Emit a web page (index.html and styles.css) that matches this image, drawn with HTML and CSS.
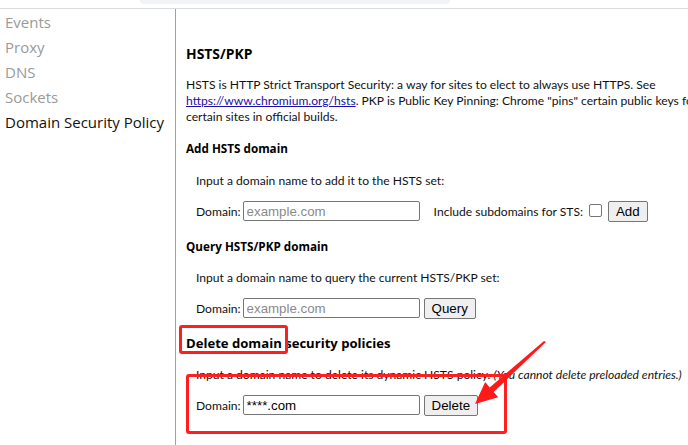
FILE: index.html
```html
<!DOCTYPE html>
<html>
<head>
<meta charset="utf-8">
<link rel="stylesheet" href="styles.css">
</head>
<body>
<div class="topbar"><div class="tab"></div></div>
<div class="main">
  <nav class="sidebar">
    <div class="nav-item">Events</div>
    <div class="nav-item">Proxy</div>
    <div class="nav-item">DNS</div>
    <div class="nav-item">Sockets</div>
    <div class="nav-item active">Domain Security Policy</div>
  </nav>
  <div class="content">
    <h2 class="h2 first">HSTS/PKP</h2>
    <p class="intro">HSTS is HTTP Strict Transport Security: a way for sites to elect to always use HTTPS. See<br><a href="#">https://www.chromium.org/hsts</a>. PKP is Public Key Pinning: Chrome "pins" certain public keys for<br>certain sites in official builds.</p>

    <h3 class="h3 sec-add">Add HSTS domain</h3>
    <div class="sub-text">Input a domain name to add it to the HSTS set:</div>
    <div class="row">
      <span>Domain:</span>
      <input class="field" type="text" placeholder="example.com">
      <span class="sts-label">Include subdomains for STS:</span>
      <span class="checkbox"></span>
      <button class="btn">Add</button>
    </div>

    <h3 class="h3">Query HSTS/PKP domain</h3>
    <div class="sub-text">Input a domain name to query the current HSTS/PKP set:</div>
    <div class="row">
      <span>Domain:</span>
      <input class="field" type="text" placeholder="example.com">
      <button class="btn">Query</button>
    </div>

    <h2 class="h2 sec-del">Delete domain security policies</h2>
    <div class="sub-text">Input a domain name to delete its dynamic HSTS policy. <i>(You cannot delete preloaded entries.)</i></div>
    <div class="row">
      <span>Domain:</span>
      <input class="field" type="text" value="****.com">
      <button class="btn">Delete</button>
    </div>
  </div>
</div>
<div class="mark mark-title"></div>
<div class="mark mark-form"></div>
<svg class="arrow" width="688" height="445" viewBox="0 0 688 445">
  <polygon fill="#ff1a1a" points="546,342 493.7,392 498.2,397.3 475,404 485.2,382.1 489.7,387.4 544,341"/>
</svg>
</body>
</html>
```
FILE: styles.css
```css
html, body {
  margin: 0;
  padding: 0;
  background: #fff;
  width: 688px;
  height: 445px;
  overflow: hidden;
  font-family: "Open Sans", "Noto Sans", sans-serif;
  color: #202124;
}
.topbar {
  height: 8px;
  border-bottom: 1px solid #dadce0;
}
.tab {
  margin-left: 140px;
  width: 310px;
  height: 4px;
  background: #f1f3f4;
  border-radius: 0 0 8px 8px;
}
.main {
  display: flex;
  height: 436px;
}
.sidebar {
  box-sizing: border-box;
  width: 176px;
  flex: none;
  border-right: 1px solid #a0a0a0;
  padding-top: 1px;
}
.nav-item {
  font-size: 15px;
  line-height: 25px;
  padding-left: 5px;
  color: #9a9a9a;
  white-space: nowrap;
}
.nav-item.active {
  color: #111;
}
.content {
  padding-left: 10px;
  font-family: "Lato", "Open Sans", sans-serif;
  font-size: 12.1px;
  white-space: nowrap;
  overflow: hidden;
  flex: 1;
}
.h2 {
  font-family: "Open Sans", sans-serif;
  font-size: 13.1px;
  font-weight: bold;
  line-height: 20px;
  margin: 15px 0 0 0;
  color: #000;
}
.h2.first { margin-top: 35px; font-size: 13.9px; }
.intro {
  margin: 13px 0 0 0;
  line-height: 16px;
  color: #111;
}
.intro a { color: #1a0dab; }
.h3 {
  font-family: "Open Sans", sans-serif;
  font-size: 11.7px;
  font-weight: bold;
  line-height: 18px;
  margin: 16px 0 0 0;
  color: #000;
}
.h3.sec-add { margin-top: 14px; }
.sub-text {
  margin: 15px 0 0 10px;
  line-height: 16px;
  color: #111;
}
.h3.sec-add + .sub-text { margin-top: 16px; }
.h2.sec-del + .sub-text { margin-top: 14px; }
.row {
  margin: 12px 0 0 10px;
  height: 20px;
  display: flex;
  align-items: center;
  color: #111;
}
.field {
  margin: 0 0 0 2px;
  width: 177px;
  height: 20px;
  box-sizing: border-box;
  border: 1px solid #767676;
  border-radius: 2px;
  padding: 0 3px;
  font-family: "Liberation Sans", Arial, sans-serif;
  font-size: 13.3px;
  color: #000;
}
.field::placeholder { color: #8a8a8a; }
.sts-label { margin-left: 14px; }
.checkbox {
  width: 11px;
  height: 11px;
  border: 1px solid #767676;
  border-radius: 2px;
  margin-left: 6px;
  margin-top: -2px;
}
.btn {
  margin-left: 4px;
  height: 21px;
  box-sizing: border-box;
  border: 1px solid #767676;
  border-radius: 2px;
  background: #efefef;
  padding: 0 7px;
  font-family: "Liberation Sans", Arial, sans-serif;
  font-size: 13.3px;
  color: #000;
}
.checkbox + .btn { margin-left: 6px; }
.mark {
  position: absolute;
  border: 3px solid #ff1f1f;
  border-radius: 3px;
  box-sizing: border-box;
}
.mark-title { left: 179px; top: 325px; width: 109px; height: 29px; }
.mark-form { left: 186px; top: 374px; width: 321px; height: 60px; }
.arrow {
  position: absolute;
  left: 0;
  top: 0;
}
```
